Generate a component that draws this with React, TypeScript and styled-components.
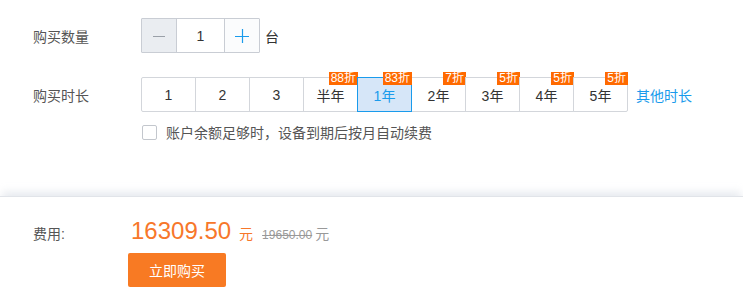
import React, { useState } from 'react';
import styled, { createGlobalStyle } from 'styled-components';

const GlobalStyle = createGlobalStyle`
  html, body {
    margin: 0;
    padding: 0;
    background: #fff;
    font-family: Arial, "Liberation Sans", "Noto Sans CJK SC", sans-serif;
    color: #333;
  }
  * { box-sizing: border-box; }
`;

const Page = styled.div`
  width: 743px;
  height: 293px;
  overflow: hidden;
`;

const Config = styled.div`
  height: 196px;
  padding: 18px 0 0 33px;
`;

const Row = styled.div<{ $mt?: number }>`
  display: flex;
  align-items: center;
  margin-top: ${(p) => p.$mt || 0}px;
`;

const Label = styled.div<{ $w: number }>`
  width: ${(p) => p.$w}px;
  flex-shrink: 0;
  font-size: 14px;
  color: #555;
`;

const Stepper = styled.div`
  display: flex;
  height: 35px;
  border: 1px solid #c9cdd4;
  border-radius: 1px;
`;

const StepBtn = styled.div<{ $disabled?: boolean }>`
  width: 34px;
  display: flex;
  align-items: center;
  justify-content: center;
  background: ${(p) => (p.$disabled ? '#eaedf1' : '#fbfcfd')};
  color: ${(p) => (p.$disabled ? '#9aa0a8' : '#1a9bec')};
`;

const StepInput = styled.div`
  width: 49px;
  border-left: 1px solid #c9cdd4;
  border-right: 1px solid #c9cdd4;
  display: flex;
  align-items: center;
  justify-content: center;
  font-size: 14px;
  color: #333;
  background: #fff;
`;

const Unit = styled.span`
  margin-left: 5px;
  font-size: 14px;
  color: #333;
`;

const Periods = styled.div`
  display: flex;
`;

const Period = styled.div<{ $active?: boolean }>`
  position: relative;
  width: 55px;
  height: 35px;
  margin-left: -1px;
  border: 1px solid ${(p) => (p.$active ? '#1a9bec' : '#d3d6db')};
  background: ${(p) => (p.$active ? '#d6e6f8' : '#fff')};
  color: ${(p) => (p.$active ? '#1a9bec' : '#333')};
  z-index: ${(p) => (p.$active ? 1 : 0)};
  display: flex;
  align-items: center;
  justify-content: center;
  font-size: 14px;
  cursor: pointer;
  &:first-child {
    margin-left: 0;
    border-radius: 2px 0 0 2px;
  }
  &:last-child {
    border-radius: 0 2px 2px 0;
  }
`;

const Badge = styled.span`
  position: absolute;
  top: -6px;
  right: -1px;
  height: 13px;
  line-height: 13px;
  padding: 0 2px;
  background: #ff6a00;
  color: #fff;
  font-size: 12px;
  z-index: 2;
`;

const MoreLink = styled.a`
  margin-left: 8px;
  font-size: 14px;
  color: #1a9bec;
  text-decoration: none;
`;

const CheckRow = styled.label`
  display: flex;
  align-items: center;
  margin: 10px 0 0 109px;
  font-size: 14px;
  color: #555;
`;

const Box = styled.span`
  width: 15px;
  height: 15px;
  border: 1px solid #c3c7cd;
  border-radius: 2px;
  background: #fff;
  margin-right: 9px;
`;

const Footer = styled.div`
  height: 97px;
  border-top: 1px solid #e1e4e9;
  box-shadow: 0 -6px 8px -2px rgba(196, 202, 214, 0.4);
  padding: 20px 0 0 33px;
  background: #fff;
  position: relative;
`;

const PriceRow = styled.div`
  display: flex;
  align-items: baseline;
`;

const Price = styled.span`
  margin-left: 3px;
  font-size: 24px;
  color: #f7772a;
`;

const Yuan = styled.span<{ $old?: boolean }>`
  font-size: 14px;
  color: ${(p) => (p.$old ? '#999' : '#f7772a')};
  margin-left: ${(p) => (p.$old ? 3 : 8)}px;
`;

const OldPrice = styled.span`
  margin-left: 9px;
  font-size: 12px;
  color: #999;
  text-decoration: line-through;
`;

const BuyButton = styled.button`
  display: block;
  margin: 8px 0 0 95px;
  width: 98px;
  height: 34px;
  border: none;
  border-radius: 2px;
  background: #f87a23;
  color: #fff;
  font-family: inherit;
  font-size: 14px;
  cursor: pointer;
`;

const periods: { text: string; badge?: string }[] = [
  { text: '1' },
  { text: '2' },
  { text: '3' },
  { text: '半年', badge: '88折' },
  { text: '1年', badge: '83折' },
  { text: '2年', badge: '7折' },
  { text: '3年', badge: '5折' },
  { text: '4年', badge: '5折' },
  { text: '5年', badge: '5折' },
];

export default function App() {
  const [selected, setSelected] = useState(4);

  return (
    <Page>
      <GlobalStyle />
      <Config>
        <Row>
          <Label $w={108}>购买数量</Label>
          <Stepper>
            <StepBtn $disabled>
              <svg width="12" height="12" viewBox="0 0 12 12">
                <path d="M0 6.5h12" stroke="currentColor" strokeWidth="1" />
              </svg>
            </StepBtn>
            <StepInput>1</StepInput>
            <StepBtn>
              <svg width="14" height="14" viewBox="0 0 14 14">
                <path d="M0 7.5h14M7.5 0v14" stroke="currentColor" strokeWidth="1.2" />
              </svg>
            </StepBtn>
          </Stepper>
          <Unit>台</Unit>
        </Row>
        <Row $mt={24}>
          <Label $w={108}>购买时长</Label>
          <Periods>
            {periods.map((p, i) => (
              <Period key={p.text} $active={i === selected} onClick={() => setSelected(i)}>
                {p.text}
                {p.badge && <Badge>{p.badge}</Badge>}
              </Period>
            ))}
          </Periods>
          <MoreLink href="#">其他时长</MoreLink>
        </Row>
        <CheckRow>
          <Box />
          账户余额足够时，设备到期后按月自动续费
        </CheckRow>
      </Config>
      <Footer>
        <PriceRow>
          <Label $w={95}>费用:</Label>
          <Price>16309.50</Price>
          <Yuan>元</Yuan>
          <OldPrice>19650.00</OldPrice>
          <Yuan $old>元</Yuan>
        </PriceRow>
        <BuyButton>立即购买</BuyButton>
      </Footer>
    </Page>
  );
}
